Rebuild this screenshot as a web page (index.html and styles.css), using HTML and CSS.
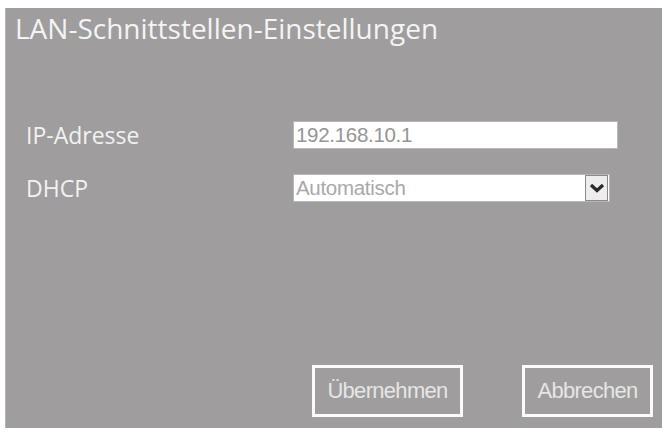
FILE: index.html
```html
<!DOCTYPE html>
<html lang="de">
<head>
<meta charset="utf-8">
<title>LAN-Schnittstellen-Einstellungen</title>
<link rel="stylesheet" href="styles.css">
</head>
<body>
<div class="dialog">
  <h1 class="title">LAN-Schnittstellen-Einstellungen</h1>
  <div class="form">
    <div class="row">
      <span class="label">IP-Adresse</span>
      <div class="field input">192.168.10.1</div>
    </div>
    <div class="row">
      <span class="label">DHCP</span>
      <div class="field select">
        <span class="value">Automatisch</span>
        <span class="arrow">
          <svg width="16" height="10" viewBox="0 0 16 10"><path d="M2 2 L8 7.5 L14 2" fill="none" stroke="#2a2a2a" stroke-width="3.2"/></svg>
        </span>
      </div>
    </div>
  </div>
  <div class="actions">
    <button class="btn btn-apply">Übernehmen</button>
    <button class="btn btn-cancel">Abbrechen</button>
  </div>
</div>
</body>
</html>
```
FILE: styles.css
```css
html, body {
  margin: 0;
  padding: 0;
  background: #ffffff;
}
body {
  width: 668px;
  height: 432px;
  padding: 8px 6px 4px 5px;
  box-sizing: border-box;
}
.dialog {
  background: #9f9d9e;
  height: 420px;
  width: 657px;
  box-sizing: border-box;
  display: flex;
  flex-direction: column;
  border-left: 1px solid #b5b3b4;
}
.title {
  margin: 0;
  padding: 2px 0 0 9px;
  font-family: "Open Sans", sans-serif;
  font-weight: 400;
  font-size: 28px;
  line-height: 36px;
  color: #f4f4f4;
  letter-spacing: 0;
}
.form {
  display: flex;
  flex-direction: column;
  gap: 25px;
  padding: 75px 0 0 20px;
}
.row {
  display: flex;
  align-items: center;
  height: 28px;
}
.label {
  width: 267px;
  font-family: "Open Sans", sans-serif;
  font-size: 23px;
  color: #f2f2f2;
}
.field {
  background: #ffffff;
  height: 28px;
  box-sizing: border-box;
  font-family: "Liberation Sans", Arial, sans-serif;
  font-size: 20.5px;
  letter-spacing: -0.3px;
  color: #959595;
  display: flex;
  align-items: center;
  padding-left: 2px;
  border: 1px solid #b8b8b8;
}
.input {
  width: 325px;
}
.select {
  width: 317px;
  justify-content: space-between;
  padding-right: 1px;
  color: #a8a8a8;
}
.arrow {
  width: 23px;
  height: 26px;
  border: 1px solid #8a8a8a;
  background: #ededed;
  box-sizing: border-box;
  display: flex;
  align-items: center;
  justify-content: center;
}
.actions {
  margin-top: auto;
  display: flex;
  justify-content: flex-end;
  gap: 59px;
  padding: 0 9px 11px 0;
}
.btn {
  height: 52px;
  background: transparent;
  border: 3px solid #fbfbfb;
  font-family: "Liberation Sans", Arial, sans-serif;
  font-size: 22px;
  color: #e6e6e6;
  padding: 0;
  letter-spacing: -0.7px;
}
.btn-apply {
  width: 151px;
}
.btn-cancel {
  width: 131px;
}
```
